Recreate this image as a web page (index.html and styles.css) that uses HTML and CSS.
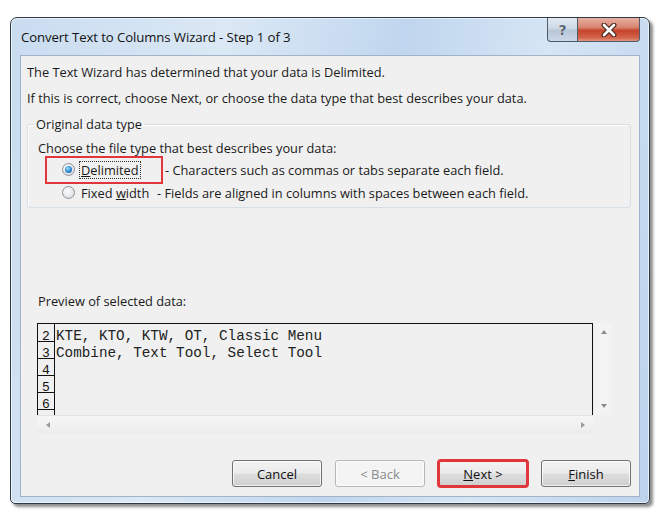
FILE: index.html
```html
<!DOCTYPE html>
<html>
<head>
<meta charset="utf-8">
<link rel="stylesheet" href="styles.css">
</head>
<body>
<div class="stage">
  <div class="window">
    <div class="titlebar">
      <span class="title">Convert Text to Columns Wizard - Step 1 of 3</span>
      <div class="controls">
        <span class="ctl help">?</span>
        <span class="ctl close"><svg width="20" height="14" viewBox="0 0 20 14"><path d="M5 2 L15 12 M15 2 L5 12" stroke="#4a2a22" stroke-width="5" stroke-linecap="round"/><path d="M5 2 L15 12 M15 2 L5 12" stroke="#fff" stroke-width="2.6" stroke-linecap="round"/></svg></span>
      </div>
    </div>
    <div class="panel">
      <p class="line l1">The Text Wizard has determined that your data is Delimited.</p>
      <p class="line l2">If this is correct, choose Next, or choose the data type that best describes your data.</p>
      <fieldset class="group">
        <legend>Original data type</legend>
        <p class="line choose">Choose the file type that best describes your data:</p>
        <div class="opts">
          <div class="opt">
            <span class="optlabel w1"><span class="radio on"></span><span class="focus"><u>D</u>elimited</span></span>
            <span class="desc">- Characters such as commas or tabs separate each field.</span>
          </div>
          <div class="opt">
            <span class="optlabel w2"><span class="radio"></span><span class="lbl">Fixed <u>w</u>idth</span></span>
            <span class="desc">- Fields are aligned in columns with spaces between each field.</span>
          </div>
          <span class="redbox r1"></span>
        </div>
      </fieldset>
      <p class="line previewlabel">Preview of selected data:</p>
      <div class="preview">
        <div class="data">
          <div class="row"><span class="num">2</span><span class="txt">KTE, KTO, KTW, OT, Classic Menu</span></div>
          <div class="row"><span class="num">3</span><span class="txt">Combine, Text Tool, Select Tool</span></div>
          <div class="row"><span class="num">4</span><span class="txt"></span></div>
          <div class="row"><span class="num">5</span><span class="txt"></span></div>
          <div class="row"><span class="num">6</span><span class="txt"></span></div>
          <div class="row"><span class="num"></span><span class="txt"></span></div>
        </div>
        <div class="vscroll"><span class="arr up"></span><span class="arr down"></span></div>
        <div class="hscroll"><span class="arr left"></span><span class="arr right"></span></div>
        <div class="corner"></div>
      </div>
      <div class="buttons">
        <button class="btn">Cancel</button>
        <button class="btn disabled">&lt; Back</button>
        <button class="btn marked"><u>N</u>ext &gt;</button>
        <button class="btn"><u>F</u>inish</button>
      </div>
    </div>
  </div>
</div>
</body>
</html>
```
FILE: styles.css
```css
* { box-sizing: border-box; }
html, body { margin: 0; padding: 0; background: #fff; }
body { font-family: "Open Sans", "Noto Sans", sans-serif; font-size: 12.8px; color: #1a1a1a; }
.stage { padding: 17px 0 0 10px; width: 660px; height: 514px; }
.window {
  width: 640px; height: 487px;
  border: 1px solid #2f3a46;
  border-radius: 7px 7px 5px 5px;
  background: linear-gradient(100deg, #c9dcf0 0%, #dbe8f5 30%, #c0d6ee 55%, #d6e5f4 75%, #bcd3ec 100%);
  box-shadow: 3px 3px 3px rgba(0,0,0,0.45), inset 0 0 0 1px rgba(255,255,255,0.6);
  padding: 0 9px 6px 9px;
  display: flex; flex-direction: column;
}
.titlebar { height: 37px; display: flex; align-items: center; }
.title { font-size: 13.2px; color: #111; padding-left: 1px; margin-top: 1px; letter-spacing: -0.1px; }
.controls { margin-left: auto; align-self: flex-start; display: flex; }
.ctl { height: 24px; display: flex; align-items: center; justify-content: center; border: 1px solid #4e5b6b; border-top: none; }
.help {
  width: 30px; border-radius: 0 0 0 4px; border-right: none;
  background: linear-gradient(#e3eaf2 0%, #ccd8e5 45%, #b7c6d8 55%, #cbd8e7 100%);
  color: #5a6472; font-weight: bold; font-size: 14px; font-family: "DejaVu Sans", sans-serif;
  text-shadow: 0 0 1px #fff;
}
.close {
  width: 63px; border-radius: 0 0 4px 0;
  background: linear-gradient(#e8b0a2 0%, #d98671 40%, #c6432a 55%, #d2624a 85%, #e49580 100%);
}
.panel {
  height: 442px; background: #f0f0f0;
  border: 1px solid #9fb3c9;
  padding: 6px 8px 0 6px;
  display: flex; flex-direction: column;
}
.line { margin: 0; line-height: 20px; white-space: nowrap; }
.l2 { margin-top: 6px; }
.group {
  margin: 6px 0 0 0; padding: 0 10px 3px 10px;
  border: 1px solid #d5dfe5; border-radius: 3px;
  box-shadow: inset 1px 1px 0 #fff;
  min-width: 0;
}
.group legend { padding: 0 2px; margin-left: -4px; line-height: 20px; }
.choose { margin-top: 4px; }
.opts { position: relative; }
.opt { display: flex; align-items: center; height: 23px; padding-left: 24px; white-space: nowrap; }
.optlabel { display: flex; align-items: center; }
.w1 { width: 103px; }
.w2 { width: 95px; }
.radio {
  width: 13px; height: 13px; border-radius: 50%;
  border: 1px solid #8b929b;
  background: radial-gradient(circle at 40% 35%, #fdfdfd 0%, #e4e6e8 60%, #cfd3d7 100%);
  margin-right: 5px; position: relative; flex: none;
}
.radio.on::after {
  content: ""; position: absolute; left: 2px; top: 2px; width: 7px; height: 7px; border-radius: 50%;
  background: radial-gradient(circle at 40% 35%, #a9dcf8 0%, #2b8fd6 50%, #1a4f8a 100%);
}
.focus { outline: 1px dotted #333; outline-offset: 0; padding: 0 1px; line-height: 16px; }
.lbl { padding-left: 1px; }
.redbox { position: absolute; border: 2px solid #e0363c; }
.r1 { left: 7px; top: -2px; width: 118px; height: 28px; }
.previewlabel { margin: 83px 0 0 11px; }
.preview {
  margin: 12px 19px 0 10px;
  display: grid; grid-template-columns: 1fr 17px; grid-template-rows: 92px 19px;
  column-gap: 2px;
}
.data {
  border-top: 1px solid #111; border-left: 1px solid #111; border-right: 1px solid #111;
  overflow: hidden; background: #f0f0f0;
  font-family: "Liberation Mono", "Courier New", monospace; font-size: 14.3px;
}
.row { display: flex; height: 17px; line-height: 23px; }
.row:first-child { height: 18px; line-height: 25px; }
.num { width: 17px; flex: none; border-right: 1px solid #111; border-bottom: 1px solid #111; text-align: center; color: #111; font-size: 13px; }
.txt { padding-left: 1px; color: #222; }
.vscroll { position: relative; background: #f3f3f3; }
.hscroll { position: relative; background: linear-gradient(#f6f6f6, #ececec); border-top: 1px solid #e4e4e4; }
.arr { position: absolute; width: 0; height: 0; border: 3px solid transparent; }
.up { left: 6px; top: 7px; border-bottom: 4px solid #8c8c8c; border-top: none; }
.down { left: 6px; bottom: 7px; border-top: 4px solid #8c8c8c; border-bottom: none; }
.left { left: 9px; top: 6px; border-right: 4px solid #9a9a9a; border-left: none; }
.right { right: 8px; top: 6px; border-left: 4px solid #9a9a9a; border-right: none; }
.buttons { margin-top: 26px; display: flex; justify-content: flex-end; gap: 13px; }
.btn {
  width: 90px; height: 27px;
  font-family: "Open Sans", "Noto Sans", sans-serif; font-size: 13px; color: #111;
  border: 1px solid #707070; border-radius: 3px;
  background: linear-gradient(#f3f3f3 0%, #ebebeb 48%, #dddddd 52%, #cfcfcf 100%);
  box-shadow: inset 0 0 0 1px rgba(255,255,255,0.7);
  padding: 0;
}
.btn.disabled { color: #8a8a8a; border-color: #b5b8bb; background: #f4f4f4; }
.btn.marked { outline: 3px solid #e0363c; outline-offset: -2px; }
```
